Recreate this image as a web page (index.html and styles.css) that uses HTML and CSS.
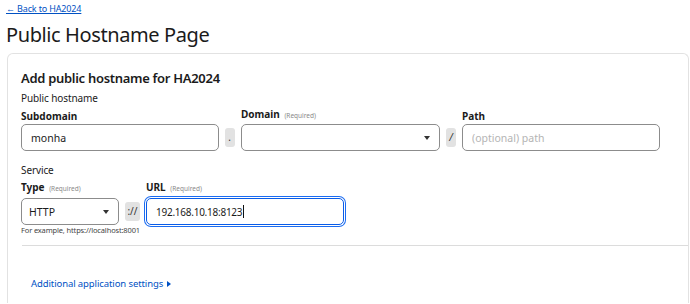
FILE: index.html
```html
<!DOCTYPE html>
<html lang="en">
<head>
  <meta charset="UTF-8" />
  <meta name="viewport" content="width=device-width, initial-scale=1.0"/>
  <title>Public Hostname Page</title>
  <link rel="stylesheet" href="styles.css">
</head>
<body>
  <a class="back" href="#">&larr; Back to HA2024</a>
  <h1>Public Hostname Page</h1>

  <div class="card">
    <h2>Add public hostname for HA2024</h2>
    <div class="group">Public hostname</div>
    <div class="row">
      <div class="field w-sub">
        <label>Subdomain</label>
        <input type="text" value="monha">
      </div>
      <span class="sep">.</span>
      <div class="field w-dom">
        <label>Domain <small>(Required)</small></label>
        <div class="select"><span></span><i class="caret"></i></div>
      </div>
      <span class="sep">/</span>
      <div class="field w-path">
        <label>Path</label>
        <input type="text" placeholder="(optional) path">
      </div>
    </div>

    <div class="group service">Service</div>
    <div class="row">
      <div class="field w-type">
        <label>Type <small>(Required)</small></label>
        <div class="select"><span>HTTP</span><i class="caret"></i></div>
      </div>
      <span class="sep wide">://</span>
      <div class="field w-url">
        <label>URL <small>(Required)</small></label>
        <div class="input focus">192.168.10.18:8123<b class="cursor"></b></div>
      </div>
    </div>
    <div class="hint">For example, https://localhost:8001</div>

    <hr>

    <a class="more" href="#">Additional application settings <i class="tri"></i></a>
  </div>
</body>
</html>
```

FILE: styles.css
```css
html {
  overflow: hidden;
}
body {
  font-family: 'Noto Sans', 'Open Sans', sans-serif;
  color: #1b1b1b;
  background: white;
  margin: 0;
  padding: 3px 1px 0 6px;
}
.back {
  display: block;
  font-size: 9px;
  letter-spacing: -0.15px;
  color: #0051c3;
  line-height: 12px;
}
h1 {
  font-size: 20px;
  font-weight: 400;
  margin: 7px 0 0;
  line-height: 26px;
  letter-spacing: -0.4px;
}
.card {
  margin: 5px 0 0 1px;
  border: 1px solid #e2e2e2;
  border-bottom: none;
  border-radius: 6px 6px 0 0;
  padding: 15px 0 0 13px;
  height: 250px;
  box-sizing: border-box;
}
h2 {
  font-size: 13px;
  font-weight: 600;
  margin: 0;
  line-height: 18px;
  letter-spacing: -0.3px;
}
.group {
  font-size: 10px;
  letter-spacing: -0.1px;
  line-height: 14px;
  margin-top: 4px;
}
.group.service {
  margin-top: 12px;
}
.row {
  display: flex;
  align-items: flex-end;
  gap: 6px;
  margin-top: 2px;
}
.service + .row {
  margin-top: 3px;
}
.field label {
  display: block;
  font-size: 10px;
  font-weight: 700;
  line-height: 14px;
  margin-bottom: 1px;
}
.w-type label, .w-url label {
  margin-bottom: 2px;
}
.field small {
  font-size: 6.5px;
  font-weight: 400;
  color: #8a8a8a;
  margin-left: 2px;
}
.w-sub { width: 198px; }
.w-dom { width: 199px; }
.w-path { width: 198px; }
.w-type { width: 98px; }
.w-url { width: 198px; }
input, .select, .input {
  display: flex;
  align-items: center;
  width: 100%;
  height: 27px;
  box-sizing: border-box;
  border: 1px solid #8c8c8c;
  border-radius: 5px;
  padding: 0 9px;
  font-family: inherit;
  font-size: 10.5px;
  color: #1b1b1b;
  background: white;
  margin: 0;
}
input::placeholder {
  color: #b4b4b4;
  font-size: 10.5px;
}
.select {
  justify-content: space-between;
  padding-left: 7px;
}
.caret {
  width: 0;
  height: 0;
  border-left: 3.5px solid transparent;
  border-right: 3.5px solid transparent;
  border-top: 4px solid #333;
}
.sep {
  height: 19px;
  min-width: 10px;
  padding: 0 1px;
  box-sizing: border-box;
  background: #e2e2e2;
  border-radius: 3px;
  font-size: 10px;
  font-style: italic;
  line-height: 19px;
  text-align: center;
  margin-bottom: 4px;
  color: #333;
}
.sep.wide {
  min-width: 15px;
  font-style: normal;
}
.input.focus {
  font-size: 10px;
  letter-spacing: -0.25px;
  border-color: #0a5ce8;
  box-shadow: 0 0 0 1px white, 0 0 0 2px #1b6cf2;
}
.cursor {
  display: inline-block;
  width: 1px;
  height: 13px;
  background: #111;
  margin-left: 1px;
}
.hint {
  font-size: 7.5px;
  letter-spacing: -0.15px;
  color: #444;
  line-height: 12px;
  margin-top: -1px;
}
hr {
  border: none;
  border-top: 1px solid #dcdcdc;
  margin: 9px 0 0 1px;
}
.more {
  display: inline-flex;
  align-items: center;
  gap: 4px;
  margin: 31px 0 0 10px;
  font-size: 9.5px;
  letter-spacing: -0.1px;
  line-height: 14px;
  color: #0051c3;
  text-decoration: none;
}
.tri {
  width: 0;
  height: 0;
  border-top: 3.5px solid transparent;
  border-bottom: 3.5px solid transparent;
  border-left: 4px solid #0051c3;
}
```
